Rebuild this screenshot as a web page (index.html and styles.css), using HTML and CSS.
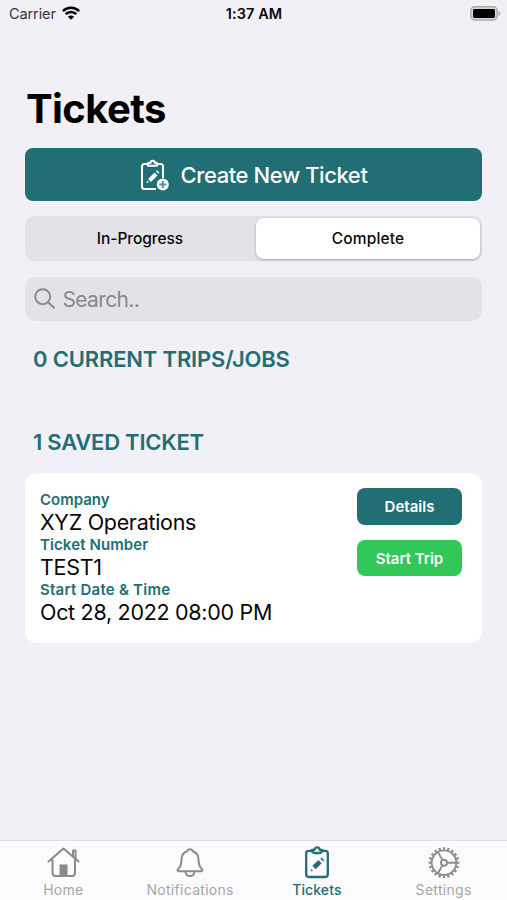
FILE: index.html
```html
<!DOCTYPE html>
<html lang="en">
<head>
<meta charset="utf-8">
<meta name="viewport" content="width=device-width, initial-scale=1">
<title>Tickets</title>
<link rel="stylesheet" href="styles.css">
</head>
<body>
<div class="app">
  <header class="status">
    <div class="carrier"><span>Carrier</span>
      <svg width="18" height="14" viewBox="0 0 18 14" fill="none" stroke="#000" stroke-width="2.5">
        <path d="M.9 5.1a11.6 11.6 0 0 1 16.2 0M3.7 8.2a7.6 7.6 0 0 1 10.6 0"/>
        <path d="M9 13.8 5.9 10.7a4.4 4.4 0 0 1 6.2 0z" fill="#000" stroke="none"/>
      </svg>
    </div>
    <div class="clock">1:37 AM</div>
    <svg class="battery" width="31" height="15" viewBox="0 0 31 15">
      <rect x=".8" y=".8" width="26.4" height="13.2" rx="4" fill="#d8d8da" stroke="#aaaaac" stroke-width="1.4"/>
      <rect x="3" y="3" width="22" height="9" rx="1.4" fill="#000"/>
      <path d="M28.6 5v5q1.7-.8 1.7-2.5t-1.7-2.5z" fill="#aaaaac"/>
    </svg>
  </header>
  <main class="content">
    <h1 class="title"><span>Tickets</span></h1>
    <button class="create">
      <svg width="30" height="32" viewBox="0 0 30 32" fill="none" stroke="#fff" stroke-width="2" stroke-linejoin="round">
        <path d="M8 5H4.5Q2 5 2 7.500v20Q2 30 4.500 30H16M17 5h3.500Q23 5 23 7.500V19"/>
        <path d="M8 4h2.500a2.200 2.200 0 0 1 4.400 0H17v2.700H8z"/>
        <path d="m9.500 21.500 6.500-6.500" stroke-width="4"/>
        <path d="m17.200 13.500 1-1" stroke-width="3.600"/>
        <path d="m6.500 24 .8-2.500 1.700 1.700z" fill="#fff" stroke="none"/>
        <circle cx="22.800" cy="25.500" r="6" fill="#fff" stroke="none"/>
        <path d="M22.800 21.900v7.200M19.200 25.500h7.200" stroke="#4b93ae" stroke-width="2"/>
      </svg>
      <span>Create New Ticket</span>
    </button>
    <div class="segments">
      <button class="segment">In-Progress</button>
      <button class="segment active">Complete</button>
    </div>
    <div class="search">
      <svg width="22" height="22" viewBox="0 0 22 22" fill="none" stroke="#88888d" stroke-width="1.900" stroke-linecap="round">
        <circle cx="8.700" cy="8.700" r="7.500"/><path d="m14.200 14.200 5.800 5.600"/>
      </svg>
      <span>Search..</span>
    </div>
    <h2 class="heading trips">0 CURRENT TRIPS/JOBS</h2>
    <h2 class="heading saved">1 SAVED TICKET</h2>
    <section class="card">
      <dl class="details">
        <dt class="company">Company</dt><dd>XYZ Operations</dd>
        <dt class="number">Ticket Number</dt><dd>TEST1</dd>
        <dt class="date">Start Date &amp; Time</dt><dd>Oct 28, 2022 08:00 PM</dd>
      </dl>
      <div class="actions">
        <button class="action view">Details</button>
        <button class="action start">Start Trip</button>
      </div>
    </section>
  </main>
  <nav class="tabs">
    <a class="tab home">
      <svg width="34" height="34" viewBox="0 0 34 34" fill="none" stroke="#8b8b8d" stroke-width="2" stroke-linecap="round" stroke-linejoin="round">
        <path d="M2.500 15.500 17.500 2.500l15 13M6.500 14v12.500Q6.500 30 9.500 30h16.500Q29 30 29 26.500V14M27 10V4.500h2.500v8"/>
        <path d="M13.500 18.500h8V30h-8z" fill="#8b8b8d" stroke="none"/>
      </svg>
      <span>Home</span>
    </a>
    <a class="tab notifications">
      <svg width="34" height="34" viewBox="0 0 34 34" fill="none" stroke="#8b8b8d" stroke-width="2" stroke-linejoin="round">
        <path d="M14.300 5.200a2.800 2.800 0 0 1 5.400 0c4 1.300 5.800 4.300 5.800 8.300 0 5.500 1 7.500 3.500 9.700.8.800.5 2-.7 2H5.700c-1.200 0-1.500-1.200-.7-2C7.500 21 8.500 19 8.500 13.500c0-4 1.800-7 5.800-8.300zM12.500 25.500a4.500 4.500 0 0 0 9 0"/>
      </svg>
      <span>Notifications</span>
    </a>
    <a class="tab tickets">
      <svg width="34" height="34" viewBox="0 0 34 34" fill="none" stroke="#216e74" stroke-width="2.300" stroke-linejoin="round">
        <path d="M12.500 4.800H8.800Q6.200 4.800 6.200 7.300v21q0 2.700 2.600 2.700h16.400q2.600 0 2.600-2.700V7.300q0-2.500-2.600-2.500h-3.700"/>
        <path d="M12 3.800h2.600a2.500 2.500 0 0 1 5 0h2.600q0 3.200-2.500 3.200h-5.200q-2.500 0-2.500-3.200z"/>
        <path d="m14 21.500 6-5.800" stroke-width="4.600"/>
        <path d="m21.700 14 1.200-1.200" stroke-width="4"/>
        <path d="m10.500 25.500 .8-2.500 1.700 1.700z" fill="#216e74" stroke="none"/>
      </svg>
      <span>Tickets</span>
    </a>
    <a class="tab settings">
      <svg width="34" height="34" viewBox="0 0 34 34" fill="none" stroke="#8b8b8d" stroke-width="1.900">
        <circle cx="17" cy="16.700" r="12.300"/>
        <circle cx="17" cy="16.700" r="14.200" pathLength="80" stroke-width="2.400" stroke-dasharray="2 2" stroke-dashoffset="1"/>
        <circle cx="17" cy="16.700" r="3"/>
        <path d="M20 16.700h9.500M15.500 14.100l-4.700-8.200M15.500 19.300l-4.700 8.200"/>
      </svg>
      <span>Settings</span>
    </a>
  </nav>
</div>
</body>
</html>
```

FILE: styles.css
```css
* { box-sizing: border-box; }
body { margin: 0; background: #f1f0f6; color: #080808; font-family: Inter, "Liberation Sans", sans-serif; }
button { border: 0; padding: 0; font: inherit; color: inherit; white-space: nowrap; letter-spacing: inherit; }
svg { display: block; flex: none; }
h1, h2, dl, dd { margin: 0; }
.app { width: 507px; height: 900px; display: flex; flex-direction: column; overflow: hidden; }
.status { height: 26px; padding: 0 6px 0 9px; display: grid; grid-template-columns: 1fr auto 1fr; align-items: center; }
.carrier { display: flex; align-items: center; gap: 6px; font-size: 14.500px; color: #333; }
.carrier span { letter-spacing: -0.100px; }
.clock { margin-right: 2px; font-size: 14.500px; font-weight: 600; letter-spacing: 0.100px; }
.battery { justify-self: end; }
.content { flex: 1; padding: 0 25px; display: flex; flex-direction: column; }
.title { margin-top: 58px; height: 48px; line-height: 50px; padding-left: 1px; font-size: 40px; font-weight: 700; letter-spacing: -0.600px; color: #000; }
.create { margin-top: 16px; height: 53px; border-radius: 8px; background: #216e74; color: #fff; display: flex; align-items: center; justify-content: center; gap: 11px; font-size: 22px; font-weight: 500; letter-spacing: -0.420px; }
.segments { margin-top: 15px; height: 45px; padding: 2px; border-radius: 9px; background: #e3e2e7; display: grid; grid-template-columns: 229px 1fr; }
.segment { border-radius: 8px; background: transparent; font-size: 15.500px; font-weight: 500; letter-spacing: -0.050px; padding-right: 3px; }
.segment.active { padding: 0; background: #fff; box-shadow: 0 1px 3px #0004; letter-spacing: 0.150px; }
.search { margin-top: 16px; height: 44px; padding: 0 9px; border-radius: 11px; background: #e3e2e7; color: #88888d; display: flex; align-items: center; gap: 6.500px; font-size: 21px; letter-spacing: -0.700px; }
.search span { letter-spacing: -0.650px; }
.heading { padding-left: 8px; height: 28px; line-height: 28px; font-size: 22px; font-weight: 600; letter-spacing: -0.170px; color: #216e74; white-space: nowrap; }
.trips { margin-top: 24px; }
.saved { margin-top: 55px; letter-spacing: -0.240px; }
.card { margin-top: 17px; height: 170px; padding: 15px 20px 0 15px; border-radius: 12px; background: #fff; display: flex; justify-content: space-between; }
.details { padding-top: 2px; }
.details dt { height: 20px; line-height: 20px; font-size: 15px; font-weight: 600; color: #216e74; }
.details .number { letter-spacing: 0.100px; }
.details .date { letter-spacing: 0.240px; }
.details dd { height: 24.800px; line-height: 24px; font-size: 21.500px; letter-spacing: -0.300px; white-space: nowrap; }
.actions { width: 105px; display: grid; grid-template-rows: 37px 36px; align-content: start; gap: 15px; }
.action { border-radius: 8px; color: #fff; font-size: 15px; font-weight: 600; }
.view { background: #216e74; }
.start { background: #31c759; }
.tabs { height: 60px; border-top: 1px solid #dedde2; background: #fbfbfd; display: grid; grid-template-columns: repeat(4, 1fr); }
.tab { display: flex; flex-direction: column; align-items: center; padding-top: 5px; color: #a6a6a8; font-size: 14px; line-height: 20px; letter-spacing: 0.300px; }
.tickets { color: #216e74; font-weight: 500; letter-spacing: 0.100px; }
```
